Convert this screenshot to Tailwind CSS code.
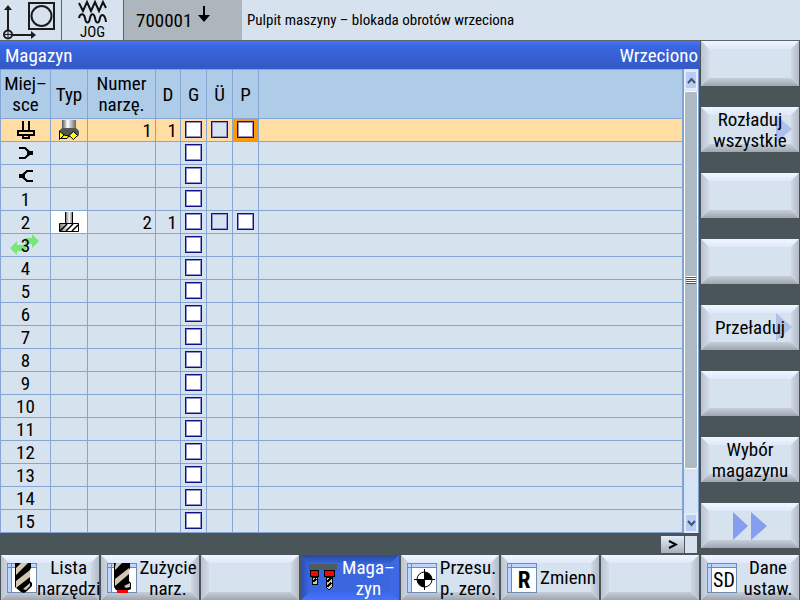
<!DOCTYPE html>
<html lang="pl">
<head>
    <meta charset="UTF-8">
    <meta name="viewport" content="width=device-width, initial-scale=1.0">
    <title>Magazyn</title>
    <script src="https://cdn.jsdelivr.net/npm/@tailwindcss/browser@4"></script>
    <style>
        body {
            font-family: 'Liberation Sans Narrow', 'Roboto Condensed', 'Liberation Sans', sans-serif;
        }
        /* bevelled softkey: four mitred gradient edges around a flat face */
        .key {
            border-image: url("data:image/svg+xml,%3Csvg xmlns='http://www.w3.org/2000/svg' width='98' height='45'%3E%3Cdefs%3E%3ClinearGradient id='t' x2='0' y2='1'%3E%3Cstop stop-color='%23f0f6ff'/%3E%3Cstop offset='1' stop-color='%23dfe8fb'/%3E%3C/linearGradient%3E%3ClinearGradient id='b' x2='0' y2='1'%3E%3Cstop stop-color='%23c6cedb'/%3E%3Cstop offset='1' stop-color='%239fa6ae'/%3E%3C/linearGradient%3E%3ClinearGradient id='l'%3E%3Cstop stop-color='%23bcc3d0'/%3E%3Cstop offset='1' stop-color='%23d2dae7'/%3E%3C/linearGradient%3E%3ClinearGradient id='r'%3E%3Cstop stop-color='%23d0d8e5'/%3E%3Cstop offset='1' stop-color='%23b4bac8'/%3E%3C/linearGradient%3E%3C/defs%3E%3Crect width='98' height='45' fill='%23d6e2ee'/%3E%3Cpath d='M0 0H98L90 8H8z' fill='url(%23t)'/%3E%3Cpath d='M0 45H98L90 37H8z' fill='url(%23b)'/%3E%3Cpath d='M0 0L8 8V37L0 45z' fill='url(%23l)'/%3E%3Cpath d='M98 0L90 8V37L98 45z' fill='url(%23r)'/%3E%3C/svg%3E") 8 fill / 8px;
        }
        .key-active {
            border-image: url("data:image/svg+xml,%3Csvg xmlns='http://www.w3.org/2000/svg' width='98' height='45'%3E%3Cdefs%3E%3ClinearGradient id='t' x2='0' y2='1'%3E%3Cstop stop-color='%23264a9c'/%3E%3Cstop offset='1' stop-color='%233460d4'/%3E%3C/linearGradient%3E%3ClinearGradient id='b' x2='0' y2='1'%3E%3Cstop stop-color='%233c68e8'/%3E%3Cstop offset='1' stop-color='%234474ff'/%3E%3C/linearGradient%3E%3ClinearGradient id='l'%3E%3Cstop stop-color='%232c50b4'/%3E%3Cstop offset='1' stop-color='%233864dc'/%3E%3C/linearGradient%3E%3C/defs%3E%3Crect width='98' height='45' fill='%233a66e0'/%3E%3Cpath d='M0 0H98L90 8H8z' fill='url(%23t)'/%3E%3Cpath d='M0 45H98L90 37H8z' fill='url(%23b)'/%3E%3Cpath d='M0 0L8 8V37L0 45z' fill='url(%23l)'/%3E%3Cpath d='M98 0L90 8V37L98 45z' fill='%233d69e6'/%3E%3C/svg%3E") 8 fill / 8px;
        }
    </style>
</head>
<body class="min-h-screen bg-[#4a5559] text-[19px] leading-[21px] text-black">
    <!-- Frame of the small page icons, reused by several softkeys -->
    <svg class="hidden">
        <symbol id="page" viewBox="0 0 30 30">
            <rect x="0.5" y="0.5" width="29" height="29" fill="#fff" stroke="#6e8cb0"/>
            <path d="M1 1H29V4H1zM1 1H4V29H1z" fill="#bed6ff"/>
            <path d="M1 4.500H29M4.500 1V29" stroke="#6e8cb0"/>
        </symbol>
    </svg>

    <!-- Status bar -->
    <header class="flex h-[41px] border-b border-[#5c6468] bg-[#d6e2ee]">
        <div class="w-[62px] border-r border-[#5c6468]">
            <svg width="61" height="40" viewBox="0 0 61 40" fill="none" stroke="#1c1c1c">
                <path d="M8 9V31M12 35H32" stroke-width="2"/>
                <path d="M4 10L8 5L12 10zM31 31L36 35L31 39z" fill="#1c1c1c" stroke="none"/>
                <circle cx="8" cy="34.500" r="4" stroke-width="2"/>
                <path d="M8 31V38M5 34.500H12"/>
                <rect x="29" y="3" width="25" height="26" stroke-width="2"/>
                <circle cx="41.500" cy="16" r="10" stroke-width="2"/>
            </svg>
        </div>
        <div class="flex w-[62px] flex-col items-center border-r border-[#5c6468]">
            <svg width="30" height="24" viewBox="0 0 30 24" fill="none" stroke="#111" stroke-width="2">
                <path d="M1 3L5 11L9 2L13 11L17 2L21 11L25 2L28 8"/>
                <path d="M1 18C2 13 6 13 7 18C8 24 11 24 12 18C13 13 16 13 17 18C18 24 21 24 22 18C23 13 27 14 28 22"/>
            </svg>
            <span class="text-[15px] leading-4">JOG</span>
        </div>
        <div class="flex w-[118px] items-center gap-1.5 bg-[#aeb6bd] pl-3">
            <span>700001</span>
            <svg class="mb-3" width="12" height="16" viewBox="0 0 12 16">
                <path d="M5 0H7V9H12L6 16L0 9H5z"/>
            </svg>
        </div>
        <p class="flex items-center pl-[5px] text-[15px]">Pulpit maszyny – blokada obrotów wrzeciona</p>
    </header>

    <main class="flex">
        <section class="min-w-0 flex-1">
            <div class="flex h-7 items-center justify-between bg-linear-to-b from-[#4474ff] via-[#3a66e0] via-20% to-[#3459c4] px-[5px] pr-[2px] text-white">
                <h1>Magazyn</h1>
                <span>Wrzeciono</span>
            </div>

            <div class="flex pr-px">
                <table class="w-full min-w-0 flex-1 table-fixed border-separate border-spacing-0 border-t border-l border-[#85a6d3] bg-[#d6e2ee]">
                    <colgroup>
                        <col class="w-[50px]"><col class="w-[37px]"><col class="w-[68px]"><col class="w-[25px]">
                        <col class="w-[26px]"><col class="w-[26px]"><col class="w-[26px]"><col>
                    </colgroup>
                    <thead>
                        <tr class="h-[49px] bg-[#aecbe8] *:border-r *:border-b *:border-[#85a6d3] *:p-0 *:font-normal">
                            <th>Miej–<br>sce</th>
                            <th>Typ</th>
                            <th>Numer<br>narzę.</th>
                            <th>D</th>
                            <th>G</th>
                            <th>Ü</th>
                            <th>P</th>
                            <th></th>
                        </tr>
                    </thead>
                    <tbody id="places"></tbody>
                </table>

                <!-- Scrollbar -->
                <div class="flex w-4 flex-col border-x border-[#7f9fd0] bg-[#d6e2f6]">
                    <button aria-label="Do góry" class="my-px flex h-5 items-center justify-center border-2 border-[#e4ebf5] bg-[#b8ccf8]">
                        <svg width="9" height="7" viewBox="0 0 9 7" fill="none" stroke="#44546c" stroke-width="2"><path d="M1 6L4.500 2L8 6"/></svg>
                    </button>
                    <div class="flex h-[378px] items-center justify-center rounded-[2px] border border-white bg-[#adb9c5]">
                        <svg width="10" height="8" viewBox="0 0 10 8" shape-rendering="crispEdges"><path d="M0 0H10V8H0z" fill="#fff"/><path d="M0 1H10V2H0zM0 3H10V4H0zM0 5H10V6H0zM0 7H10V8H0z" fill="#4a5559"/></svg>
                    </div>
                    <button aria-label="W dół" class="mt-auto flex h-5 items-center justify-center border-2 border-[#e4ebf5] bg-[#b8ccf8]">
                        <svg width="9" height="7" viewBox="0 0 9 7" fill="none" stroke="#44546c" stroke-width="2"><path d="M1 1L4.500 5L8 1"/></svg>
                    </button>
                </div>
            </div>

            <div class="flex h-[22px] justify-end gap-px pt-[3px] pr-[3px] pb-[2px]">
                <button aria-label="Dalej" class="flex w-[23px] items-center justify-center bg-linear-to-b from-[#e4ecfa] to-[#a9b0bb]">
                    <svg width="10" height="9" viewBox="0 0 10 9" fill="none" stroke="#000" stroke-width="2"><path d="M1 1L8 4.500L1 8"/></svg>
                </button>
                <div class="w-3 bg-[#d6e2ee]"></div>
            </div>
        </section>

        <!-- Vertical softkeys -->
        <nav class="flex w-[100px] flex-col gap-[21px] px-px *:h-[45px]">
            <button class="key" aria-label="Pusty"></button>
            <button class="key relative">
                <svg class="absolute top-2 right-[7px]" width="16" height="28" viewBox="0 0 16 28"><path d="M0 0L16 14L0 28z" fill="#adbfeb"/></svg>
                <span class="relative">Rozładuj<br>wszystkie</span>
            </button>
            <button class="key" aria-label="Pusty"></button>
            <button class="key" aria-label="Pusty"></button>
            <button class="key relative">
                <svg class="absolute top-2 right-[7px]" width="16" height="28" viewBox="0 0 16 28"><path d="M0 0L16 14L0 28z" fill="#adbfeb"/></svg>
                <span class="relative">Przeładuj</span>
            </button>
            <button class="key" aria-label="Pusty"></button>
            <button class="key">Wybór<br>magazynu</button>
            <button class="key flex items-center justify-center" aria-label="Dalej">
                <svg width="34" height="28" viewBox="0 0 34 28" fill="#869ef0"><path d="M0 0L15 14L0 28zM18 0L34 14L18 28z"/></svg>
            </button>
        </nav>
    </main>

    <!-- Horizontal softkeys -->
    <nav class="grid grid-cols-8 gap-[2px] px-px *:flex *:h-[45px] *:items-center *:whitespace-nowrap">
        <button class="key pl-[6px]">
            <svg class="shrink-0" width="30" height="30" viewBox="0 0 30 30">
                <use href="#page"/>
                <path d="M8 0H24V5L23 7V18L25 20V23L20 28L17 30L14 29L8 24z"/>
                <path d="M14 0H21L9 12V5zM23 7V14L9 25V18zM23 20V23L19 27L16 26z" fill="#d2c8b2"/>
            </svg>
            <span class="flex-1">Lista<br>narzędzi</span>
        </button>
        <button class="key pl-[6px]">
            <svg class="shrink-0" width="30" height="30" viewBox="0 0 30 30">
                <use href="#page"/>
                <path d="M7 0H23V5L22 7V18L24 20V26L22 27H9L7 24z"/>
                <path d="M9 0H15L8 7V4zM22 5V11L8 23V16zM23 20V24L19 25L17 23z" fill="#d2c8b2"/>
                <path d="M10 27H21V30H10z" fill="#f00"/>
            </svg>
            <span class="flex-1">Zużycie<br>narz.</span>
        </button>
        <button class="key" aria-label="Pusty"></button>
        <button class="key-active pl-[7px] text-white">
            <svg class="shrink-0" width="30" height="28" viewBox="0 0 30 28" shape-rendering="crispEdges">
                <path d="M1 0H29V6H1z" fill="#4e5b61"/>
                <path d="M2 6H10V12H2zM16 6H26V12H16z" fill="#f00" stroke="#000"/>
                <path d="M4 13H9V20H4zM18 13H24V23L21 26L18 23z" fill="#d2c8b2" stroke="#000"/>
                <path d="M5 18L8 15M19 18L23 14M19 23L23 19" stroke="#000" stroke-width="2"/>
            </svg>
            <span class="flex-1">Maga–<br>zyn</span>
        </button>
        <button class="key pl-[6px]">
            <svg class="shrink-0" width="30" height="30" viewBox="0 0 30 30">
                <use href="#page"/>
                <circle cx="17.500" cy="16.500" r="7.500" fill="#fff" stroke="#000"/>
                <path d="M17.500 16.500V9A7.500 7.500 0 0 1 25 16.500zM17.500 16.500V24A7.500 7.500 0 0 1 10 16.500z"/>
                <path d="M7 16.500H28M17.500 6V27" stroke="#000"/>
            </svg>
            <span class="flex-1">Przesu.<br>p. zero.</span>
        </button>
        <button class="key pl-[6px]">
            <svg class="shrink-0" width="30" height="30" viewBox="0 0 30 30">
                <use href="#page"/>
                <text x="17" y="25" text-anchor="middle" font-size="23" font-weight="700">R</text>
            </svg>
            <span class="flex-1">Zmienn</span>
        </button>
        <button class="key" aria-label="Pusty"></button>
        <button class="key pl-[6px]">
            <svg class="shrink-0" width="30" height="30" viewBox="0 0 30 30">
                <use href="#page"/>
                <text x="17" y="24" text-anchor="middle" font-size="20">SD</text>
            </svg>
            <span class="flex-1">Dane<br>ustaw.</span>
        </button>
    </nav>

    <script>
        const spindle = `<svg class="mx-auto" width="18" height="18" viewBox="0 0 18 18" fill="none" stroke="#000" stroke-width="2"><path d="M6 0V10M12 0V10M1 10H17V14H1zM6 14V17H12V14"/></svg>`;
        const gripper1 = `<svg class="mx-auto" width="16" height="12" viewBox="0 0 16 12"><path d="M1 1H7L10 4V8L7 11H1" fill="none" stroke="#000" stroke-width="2"/><path d="M9 2L12 4H15V8H12L9 10z"/></svg>`;
        const gripper2 = `<svg class="mx-auto" width="16" height="12" viewBox="0 0 16 12"><path d="M15 1H9L6 4V8L9 11H15" fill="none" stroke="#000" stroke-width="2"/><path d="M7 2L4 4H1V8H4L7 10z"/></svg>`;
        const current = `<span class="relative block"><svg class="absolute -top-px left-[9px]" width="30" height="21" viewBox="0 0 30 21" fill="#78e678"><path d="M0 14L7 7V11H16V17H7V21zM29 7L22 0V4H15V10H22V14z"/></svg><span class="relative">3</span></span>`;
        const faceMill = `<svg class="mx-auto" width="22" height="20" viewBox="0 0 22 20"><defs><linearGradient id="shank"><stop stop-color="#555"/><stop offset=".4" stop-color="#fff"/><stop offset="1" stop-color="#666"/></linearGradient></defs><path d="M4 0H18V9H4z" fill="url(#shank)"/><path d="M4 8H18L21 11V15L19 17H3L1 15V11z" fill="#555"/><path d="M1.500 11L6 15L1.500 19.500zM6 15L11 16L9 18.500H3zM11 15.500L15.500 11.500L19.500 15.500L15.500 19.500z" fill="#ff0" stroke="#000"/></svg>`;
        const endMill = `<svg class="mx-auto" width="22" height="20" viewBox="0 0 22 20"><defs><linearGradient id="stem"><stop stop-color="#555"/><stop offset=".6" stop-color="#fff"/><stop offset="1" stop-color="#888"/></linearGradient><linearGradient id="cut"><stop stop-color="#777"/><stop offset=".5" stop-color="#fff"/></linearGradient></defs><path d="M7 0H14V12H7z" fill="url(#stem)"/><path d="M7.500 0V12M14.500 0V12" stroke="#000"/><path d="M1.500 11.500H20.500V19.500H1.500z" fill="url(#cut)" stroke="#000"/><path d="M2 19L9 12M8 19L15 12M14 19L20 13" stroke="#000" stroke-width="1.500"/></svg>`;

        const places = [
            { place: spindle, name: 'Wrzeciono', icon: faceMill, tool: 1, d: 1, selected: true },
            { place: gripper1, name: 'Chwytak 1' },
            { place: gripper2, name: 'Chwytak 2' },
            { place: '1', name: '1' },
            { place: '2', name: '2', icon: endMill, tool: 2, d: 1 },
            { place: current, name: '3' }
        ];
        for (let n = 4; n <= 15; n++) places.push({ place: n, name: n });

        const box = (label, fill) => `<input type="checkbox" aria-label="${label}" class="mx-auto mb-px block size-[17px] appearance-none border border-[#10108c] shadow-[inset_0_0_0_1px_#9090cc] ${fill}">`;

        document.getElementById('places').innerHTML = places.map(p => `
            <tr class="h-[23px] *:h-[23px] *:border-r *:border-b *:border-[#85a6d3] *:p-0 ${p.selected ? 'bg-[#ffdda3]' : ''}">
                <td class="text-center">${p.place}</td>
                <td class="${p.icon && !p.selected ? 'bg-white' : ''}">${p.icon || ''}</td>
                <td><div class="pr-[3px] text-right">${p.tool || ''}</div></td>
                <td><div class="pr-[3px] text-right">${p.d || ''}</div></td>
                <td>${box('G ' + p.name, 'bg-white')}</td>
                <td>${p.tool ? box('Ü ' + p.name, 'bg-[#d6e2ee]') : ''}</td>
                <td class="${p.selected ? 'bg-[#ff9a00]' : ''}">${p.tool ? box('P ' + p.name, 'bg-white') : ''}</td>
                <td></td>
            </tr>`).join('');
    </script>
</body>
</html>
